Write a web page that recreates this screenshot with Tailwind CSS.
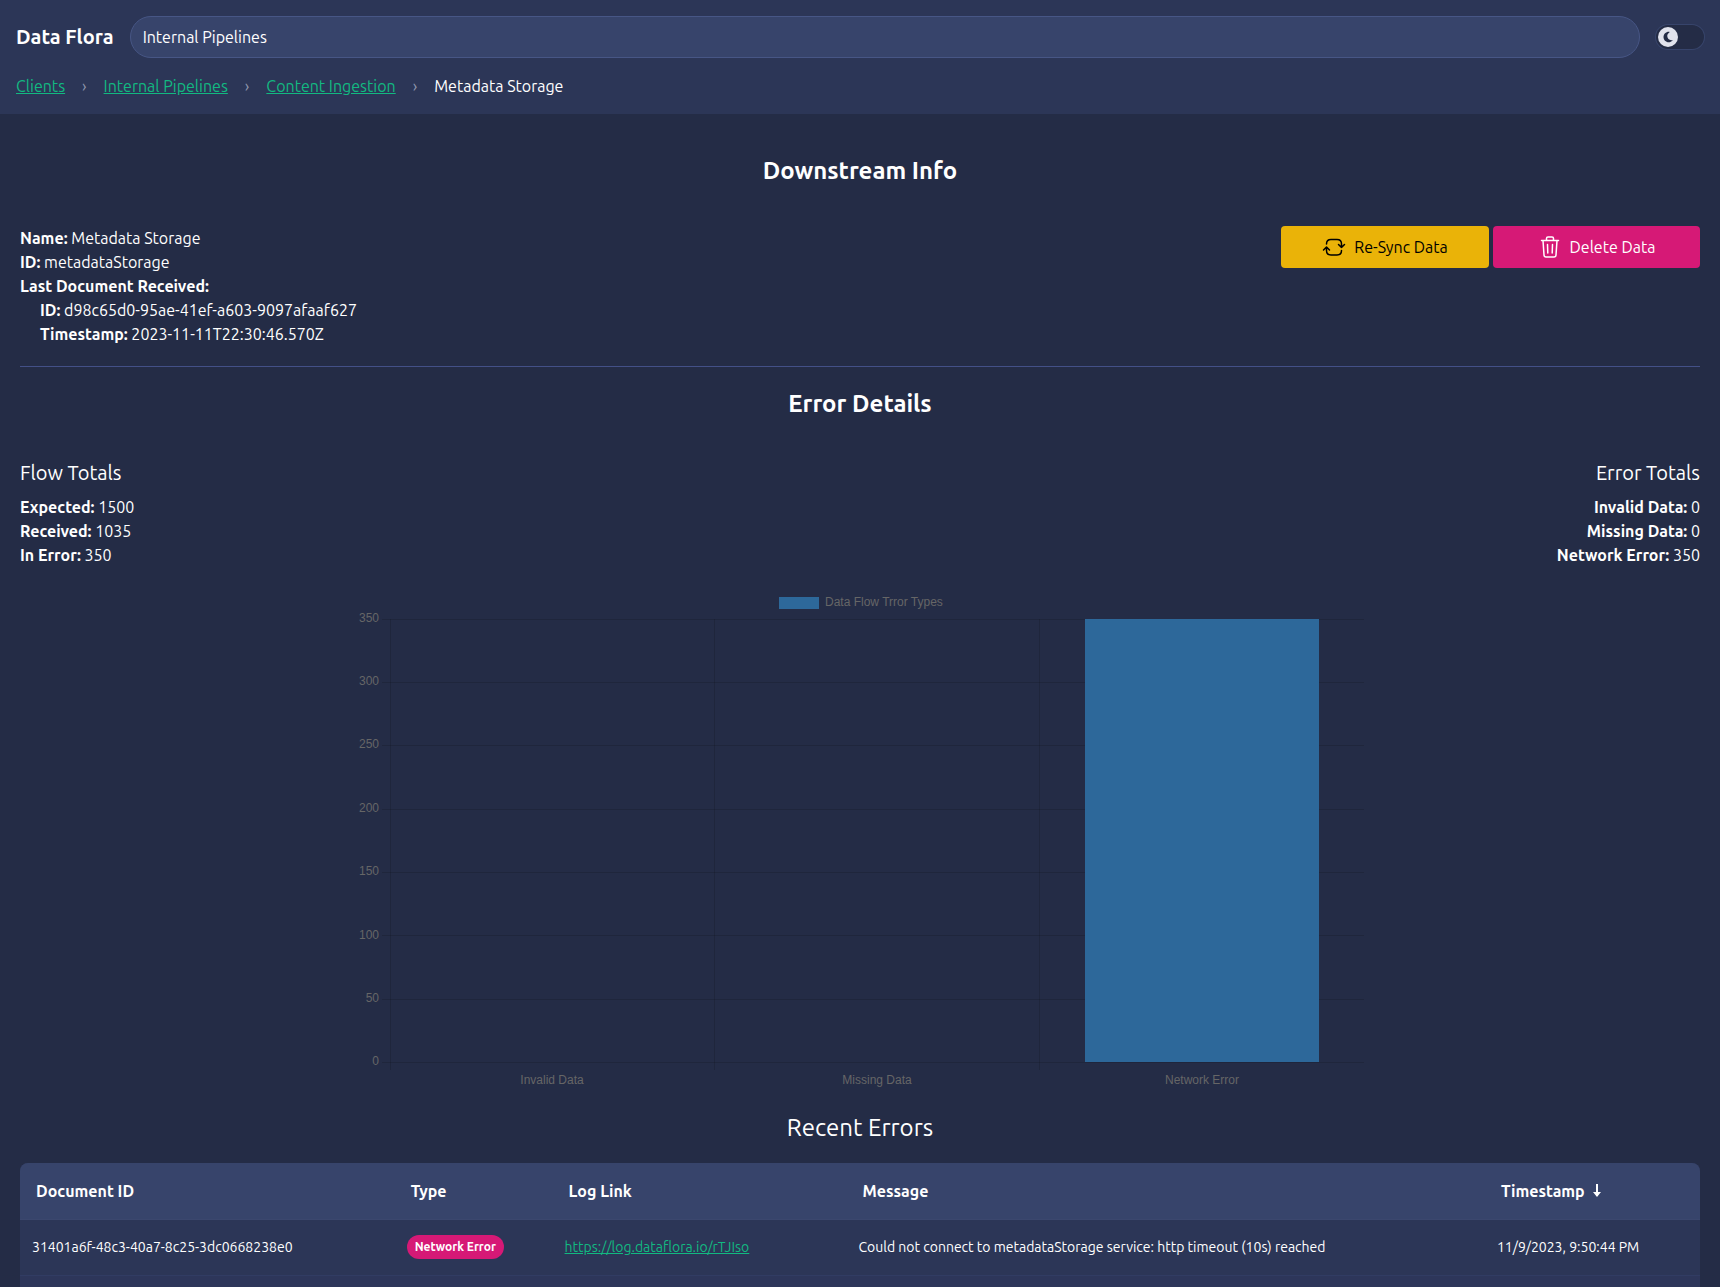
<!DOCTYPE html>
<html lang="en">
<head>
<meta charset="utf-8">
<meta name="viewport" content="width=device-width, initial-scale=1">
<title>Data Flora</title>
<script src="https://cdn.jsdelivr.net/npm/@tailwindcss/browser@4"></script>
</head>
<body class="flex h-screen flex-col overflow-hidden bg-[#242c46] font-['Ubuntu','Roboto',sans-serif] text-base text-white">
  <header class="flex shrink-0 flex-col gap-4 bg-[#2c3657] p-4">
    <div class="flex items-center gap-4">
      <span class="text-xl font-bold">Data Flora</span>
      <input type="text" aria-label="Client" value="Internal Pipelines" class="h-[42px] min-w-0 flex-1 rounded-full border border-[#475685] bg-[#37446b] px-3 outline-none">
      <button type="button" role="switch" aria-checked="false" aria-label="Light mode" class="flex h-6 w-12 items-center rounded-full bg-[#242c46] px-0.5 ring-1 ring-[#37446b]">
        <span class="flex size-5 items-center justify-center rounded-full bg-[#e1e3ed]">
          <svg viewBox="0 0 384 512" class="size-3" fill="#242c46"><path d="M223.500 32C100 32 0 132.300 0 256S100 480 223.500 480c60.600 0 115.500-24.200 155.800-63.400c5-4.900 6.300-12.500 3.100-18.700s-10.100-9.700-17-8.500c-9.800 1.700-19.800 2.600-30.100 2.600c-96.900 0-175.500-78.800-175.500-176c0-65.800 36-123.100 89.300-153.300c6.100-3.500 9.200-10.500 7.700-17.300s-7.300-11.900-14.300-12.500c-6.300-.5-12.600-.8-19-.8z"/></svg>
        </span>
      </button>
    </div>
    <nav aria-label="Breadcrumb">
      <ol class="flex items-center gap-[17px]">
        <li><a href="#" class="text-[#12b981] underline">Clients</a></li>
        <li class="text-[#9097ae]" aria-hidden="true">›</li>
        <li><a href="#" class="text-[#12b981] underline">Internal Pipelines</a></li>
        <li class="text-[#9097ae]" aria-hidden="true">›</li>
        <li><a href="#" class="text-[#12b981] underline">Content Ingestion</a></li>
        <li class="text-[#9097ae]" aria-hidden="true">›</li>
        <li aria-current="page">Metadata Storage</li>
      </ol>
    </nav>
  </header>

  <main class="flex-1 overflow-y-auto px-5 [scrollbar-width:none]">
    <h2 class="pt-[41px] pb-[39px] text-center text-2xl font-bold">Downstream Info</h2>
    <section class="flex items-start justify-between border-b border-[#435087] pb-5">
      <div>
        <p><strong>Name:</strong> Metadata Storage</p>
        <p><strong>ID:</strong> metadataStorage</p>
        <p><strong>Last Document Received:</strong></p>
        <p class="pl-5"><strong>ID:</strong> d98c65d0-95ae-41ef-a603-9097afaaf627</p>
        <p class="pl-5"><strong>Timestamp:</strong> 2023-11-11T22:30:46.570Z</p>
      </div>
      <div class="flex gap-1">
        <button type="button" class="flex h-[42px] w-52 items-center justify-center gap-2 rounded bg-[#eab308] text-black">
          <svg viewBox="0 0 24 24" class="size-6" fill="none" stroke="currentColor" stroke-width="1.500" stroke-linecap="round" stroke-linejoin="round"><path d="M4.500 9C4.500 6 6 4.500 9 4.500h6c3 0 4.500 1.500 4.500 4.500v3.500M16.500 9.500l3 3 3-3M19.500 15.500c0 3-1.500 4.500-4.500 4.500H9c-3 0-4.500-1.500-4.500-4.500V12M1.500 15l3-3 3 3"/></svg>
          Re-Sync Data
        </button>
        <button type="button" class="flex h-[42px] w-[207px] items-center justify-center gap-2 rounded bg-[#d61976]">
          <svg viewBox="0 0 24 24" class="size-6" fill="none" stroke="currentColor" stroke-width="1.500" stroke-linecap="round" stroke-linejoin="round"><path d="M3.500 5.500h17M8.500 5.500V3.500c0-1 .5-1.500 1.500-1.500h4c1 0 1.500.5 1.500 1.500v2M5 5.500l1 14.500c.1 1.500.8 2 2 2h8c1.200 0 1.900-.5 2-2l1-14.500M9.500 9.500l.3 8.500M14.500 9.500l-.3 8.500"/></svg>
          Delete Data
        </button>
      </div>
    </section>

    <h2 class="pt-[21px] pb-[39px] text-center text-2xl font-bold">Error Details</h2>
    <section class="flex justify-between pb-5">
      <div>
        <h3 class="pb-2 text-xl">Flow Totals</h3>
        <p><strong>Expected:</strong> 1500</p>
        <p><strong>Received:</strong> 1035</p>
        <p><strong>In Error:</strong> 350</p>
      </div>
      <div class="text-right">
        <h3 class="pb-2 text-xl">Error Totals</h3>
        <p><strong>Invalid Data:</strong> 0</p>
        <p><strong>Missing Data:</strong> 0</p>
        <p><strong>Network Error:</strong> 350</p>
      </div>
    </section>

    <svg viewBox="0 0 1008 504" role="img" aria-label="Data flow error types" class="mx-auto block w-3/5 font-['Liberation_Sans',Arial,sans-serif] text-xs" fill="#666666">
      <rect x="423" y="10" width="40" height="12" fill="#2d689a"/>
      <text x="469" y="19">Data Flow Trror Types</text>
      <g stroke="#000000" stroke-opacity="0.130" shape-rendering="crispEdges">
        <path d="M26 32.500H1008M26 95.500H1008M26 158.500H1008M26 222.500H1008M26 285.500H1008M26 348.500H1008M26 412.500H1008M26 475.500H1008"/>
        <path d="M34.500 32V483M358.500 32V483M683.500 32V483"/>
      </g>
      <rect x="729" y="32" width="234" height="443" fill="#2d689a"/>
      <g text-anchor="end">
        <text x="23" y="35">350</text>
        <text x="23" y="98">300</text>
        <text x="23" y="161">250</text>
        <text x="23" y="225">200</text>
        <text x="23" y="288">150</text>
        <text x="23" y="352">100</text>
        <text x="23" y="415">50</text>
        <text x="23" y="478">0</text>
      </g>
      <g text-anchor="middle">
        <text x="196" y="497">Invalid Data</text>
        <text x="521" y="497">Missing Data</text>
        <text x="846" y="497">Network Error</text>
      </g>
    </svg>

    <h3 class="pt-[21px] pb-[19px] text-center text-2xl">Recent Errors</h3>
    <div class="overflow-hidden rounded-lg bg-[#2c3657]">
      <table class="w-full table-fixed text-left">
        <colgroup>
          <col class="w-[22.3%]"><col class="w-[9.4%]"><col class="w-[17.5%]"><col class="w-[38%]"><col class="w-[12.8%]">
        </colgroup>
        <thead class="bg-[#37446b]">
          <tr class="h-14 border-b border-[#3b476e]">
            <th class="px-4 font-bold">Document ID</th>
            <th class="px-4 font-bold">Type</th>
            <th class="px-4 font-bold">Log Link</th>
            <th class="px-4 font-bold">Message</th>
            <th class="px-4 font-bold" aria-sort="descending">
              <span class="flex items-center gap-2">Timestamp
                <svg viewBox="0 0 8 13" class="h-[13px] w-2" fill="currentColor" aria-hidden="true"><path d="M3 0h2v8h3L4 13 0 8h3z"/></svg>
              </span>
            </th>
          </tr>
        </thead>
        <tbody class="text-sm">
          <tr class="h-14 border-b border-[#313c63]">
            <td class="px-3">31401a6f-48c3-40a7-8c25-3dc0668238e0</td>
            <td class="px-3"><span class="inline-block rounded-full bg-[#d61976] px-2 py-1 align-middle text-xs font-bold whitespace-nowrap">Network Error</span></td>
            <td class="px-3"><a href="#" class="text-[#12b981] underline">https://log.dataflora.io/rTJIso</a></td>
            <td class="px-3">Could not connect to metadataStorage service: http timeout (10s) reached</td>
            <td class="px-3 whitespace-nowrap">11/9/2023, 9:50:44 PM</td>
          </tr>
          <tr class="h-14 bg-[#2d365a]">
            <td></td><td></td><td></td><td></td><td></td>
          </tr>
        </tbody>
      </table>
    </div>
  </main>
</body>
</html>
